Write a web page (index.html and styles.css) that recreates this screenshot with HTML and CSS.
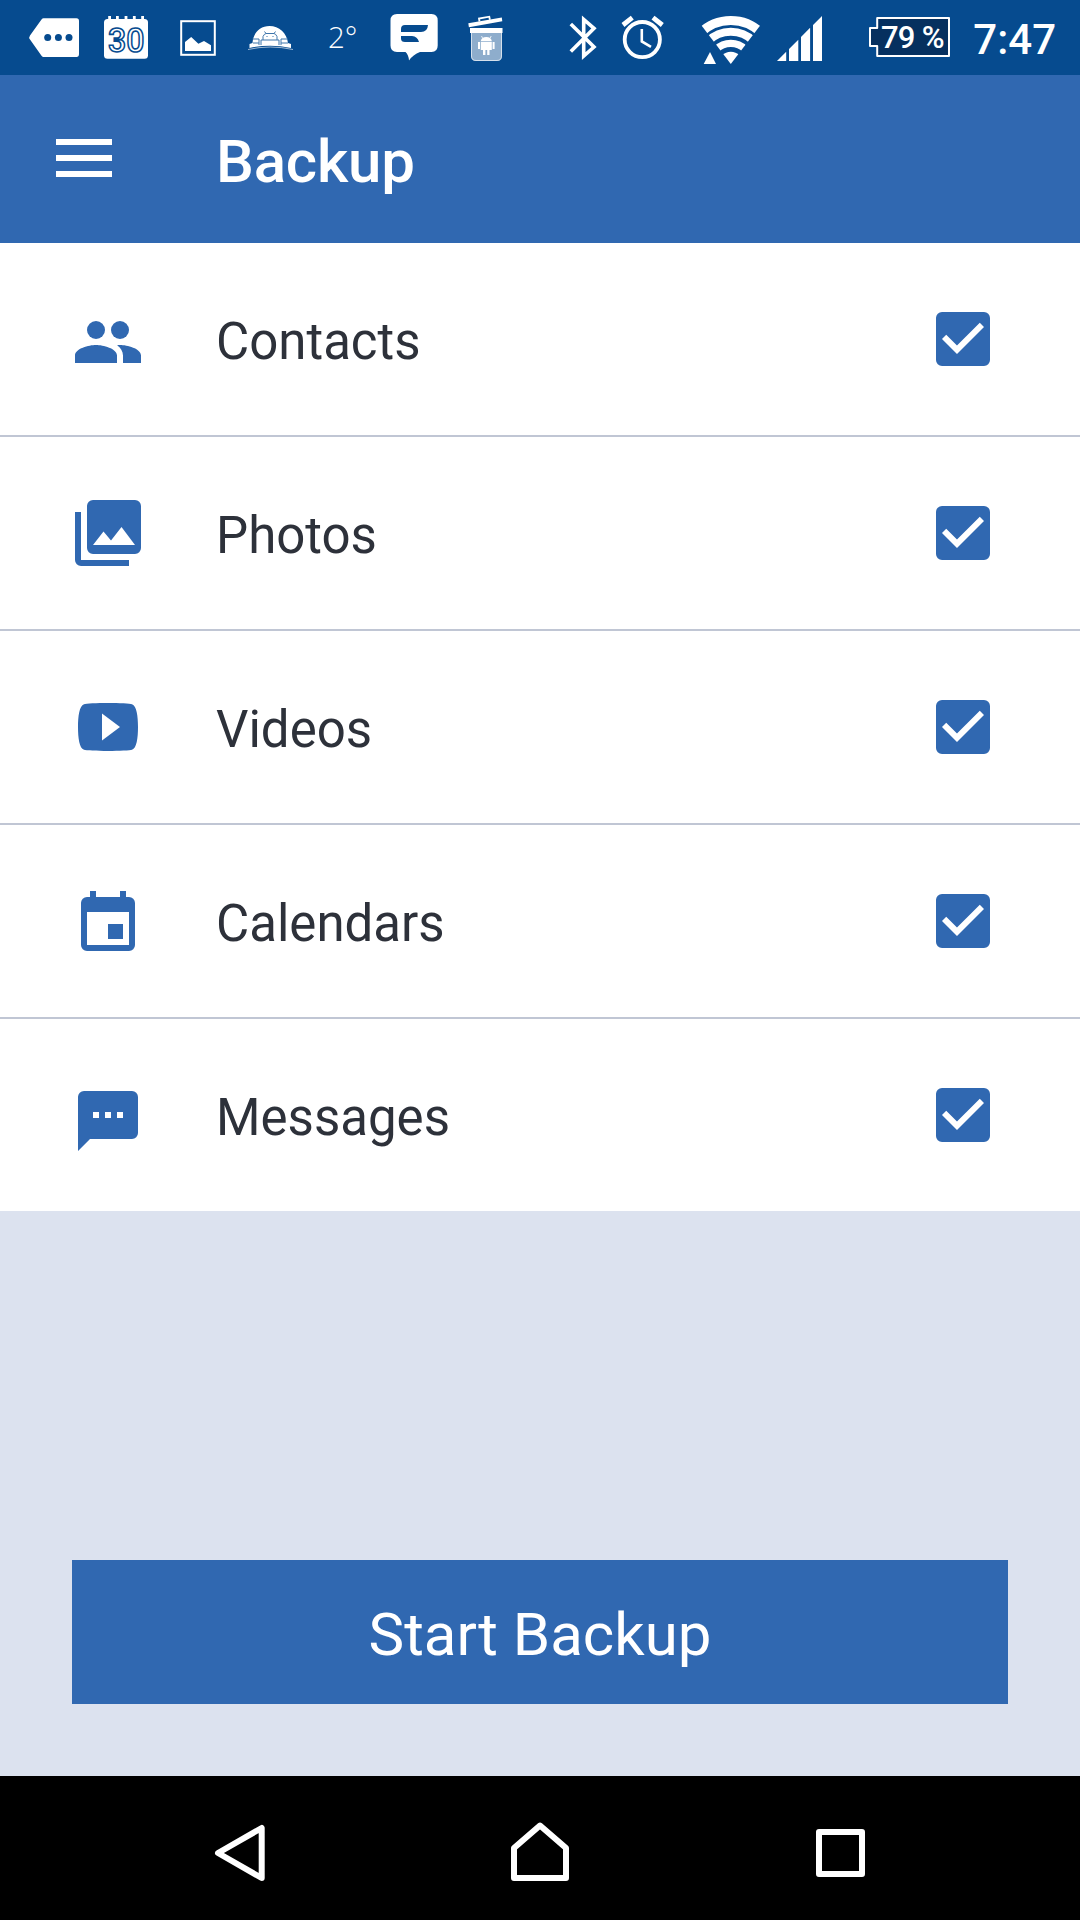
FILE: index.html
```
<!DOCTYPE html>
<html lang="en">
<head>
    <meta charset="UTF-8">
    <meta name="viewport" content="width=device-width, initial-scale=1.0">
    <title>Backup</title>
    <link rel="stylesheet" href="styles.css">
</head>
<body>
    <div class="screen">
        <div class="status-bar">
            <div class="notifications">
                <!-- more -->
                <svg viewBox="0 0 72 75">
                    <path d="M25.5 18.3H58.5Q61 18.3 61 21V54Q61 57 58.5 57H25.5Q24.5 57 23.5 55.8L12 39.5Q10.5 37.5 12 35.5L23.5 19.5Q24.5 18.3 25.5 18.3Z"/>
                    <g class="cut">
                        <circle cx="29.7" cy="37.4" r="3.5"/>
                        <circle cx="40.4" cy="37.4" r="3.5"/>
                        <circle cx="51" cy="37.4" r="3.5"/>
                    </g>
                </svg>
                <!-- calendar -->
                <svg viewBox="0 0 72 75">
                    <rect x="14" y="19" width="44" height="39.7" rx="3.5"/>
                    <path d="M18.2 16h2.8v4h-2.8zM26 16h2.8v4H26zM34.6 16h2.8v4h-2.8zM42.9 16h2.8v4h-2.8zM51.2 16h2.8v4h-2.8z"/>
                    <text class="cal-day" x="18" y="51.5" textLength="36.5" lengthAdjust="spacingAndGlyphs">30</text>
                </svg>
                <!-- picture -->
                <svg viewBox="0 0 72 75">
                    <rect class="line" x="19.2" y="21.2" width="33.6" height="33.6" stroke-width="2"/>
                    <path d="M23 42L29.2 37L36.4 43.8L42 41L49 45.2V51H23Z"/>
                </svg>
                <!-- android dome -->
                <svg viewBox="0 0 72 75">
                    <path d="M18.5 43C19 33 26 26 35.5 26S53 33 54 43L57 44V48Q36 43.5 15.5 48V44Z"/>
                    <path class="line" d="M14 49.5Q36 44.5 59 49.5" stroke-width="1" opacity=".6"/>
                    <g class="cut-line">
                        <path d="M29 40V36.5Q30 34 32 33.5L30.5 31.5M43 40V36.5Q42 34 40 33.5L41.5 31.5M32 33.5H40M27 45V40H45V45M18.5 39H25V45M54 39H47V45M19 43H25M47 43H54M32.5 36.5H33.5M38.5 36.5H39.5"/>
                    </g>
                </svg>
                <!-- temperature -->
                <svg viewBox="0 0 72 75">
                    <text class="temp" x="22" y="48">2°</text>
                </svg>
                <!-- chat -->
                <svg viewBox="0 0 72 75">
                    <path d="M19 14H53.5Q59.7 14 59.7 20.5V45.5Q59.7 52 53.5 52H42Q35 54.5 31 60.5Q30.5 54.5 27.5 52H19Q12.5 52 12.5 45.5V20.5Q12.5 14 19 14Z"/>
                    <path class="cut" d="M27 25H50Q49.5 32 43 32H23V29Q23 25 27 25ZM23 36H34Q39.5 36.3 41 42H27Q23 42 23 38.5Z"/>
                </svg>
                <!-- trash -->
                <svg viewBox="0 0 72 75">
                    <path d="M18.3 23.2L51.8 17.5L52.3 21.2L18.9 27.2Z"/>
                    <path class="line" d="M29.5 21.5L29 18.5L39.3 16.7L39.9 19.7" stroke-width="1.8"/>
                    <rect x="20" y="28" width="32.5" height="5"/>
                    <path d="M21 33H52V56Q52 61 47 61H26Q21 61 21 56Z" opacity=".55"/>
                    <path class="line" d="M21.5 33V56Q21.5 60.5 26 60.5H47Q51.5 60.5 51.5 56V33" stroke-width=".9" opacity=".7"/>
                    <path d="M30.8 41Q31.5 37 36.3 37T41.8 41ZM30.8 41.8H41.8V50H39.5V55H37.2V50H35.4V55H33V50H30.8ZM28 42H30V49H28ZM42.6 42H44.6V49H42.6Z"/>
                    <path class="line" d="M32.5 38L31.5 36M40.2 38L41.2 36" stroke-width=".8"/>
                </svg>
            </div>

            <div class="system">
                <!-- bluetooth -->
                <svg class="bluetooth" viewBox="0 0 60 75">
                    <path class="line" d="M18.8 24L42 47L31.7 56V19.5L42 28.3L18.8 51.5" stroke-width="3.6"/>
                </svg>
                <!-- alarm -->
                <svg class="alarm" viewBox="0 0 60 75">
                    <circle class="line" cx="30.3" cy="39.6" r="17.6" stroke-width="3.8"/>
                    <path class="line" d="M29.8 29V41.5L39 46.8" stroke-width="2.6"/>
                    <path class="line" d="M11 25L20.3 17.7M50.3 25L41 17.7" stroke-width="4.8"/>
                </svg>
                <!-- wifi -->
                <svg class="wifi" viewBox="0 0 70 75">
                    <clipPath id="wedge"><path d="M34.8 64L-2.2 15.3V0H72V15.3Z"/></clipPath>
                    <g clip-path="url(#wedge)">
                        <circle cx="34.8" cy="64" r="12.3"/>
                        <circle class="line" cx="34.8" cy="64" r="20.6" stroke-width="7.2"/>
                        <circle class="line" cx="34.8" cy="64" r="32.2" stroke-width="8"/>
                        <circle class="line" cx="34.8" cy="64" r="43.6" stroke-width="9"/>
                    </g>
                    <path d="M7.7 64L14 52L20 64Z"/>
                </svg>
                <!-- signal -->
                <svg class="signal" viewBox="0 0 60 75">
                    <path d="M7 61L16.2 51.8V61ZM19 61V49L28.3 39.7V61ZM31 61V37L40.1 27.8V61ZM43 61V25L52 16V61Z"/>
                </svg>
                <!-- battery -->
                <svg class="battery" viewBox="0 0 92 75">
                    <path class="battery-body" d="M13.2 18H85V56H13.2V46H6V28H13.2Z"/>
                    <text class="battery-text" x="17" y="48" textLength="63.5">79 %</text>
                </svg>
                <span class="clock">7:47</span>
            </div>
        </div>

        <div class="app-bar">
            <div class="menu">
                <span></span>
                <span></span>
                <span></span>
            </div>
            <div class="title">Backup</div>
        </div>

        <div class="list">
            <div class="row">
                <svg class="icon" viewBox="0 0 24 24">
                    <path d="M16 14c-.29 0-.62.02-.97.05 1.16.84 1.97 1.97 1.97 3.45V20h6v-2.5c0-2.33-4.67-3.5-7-3.5zM8 14c-2.33 0-7 1.17-7 3.5V20h14v-2.5c0-2.33-4.67-3.5-7-3.5z"/>
                    <circle cx="8" cy="9" r="3"/>
                    <circle cx="16" cy="9" r="3"/>
                </svg>
                <span class="label">Contacts</span>
                <svg class="check" viewBox="0 0 24 24"><use href="#checkbox"/></svg>
            </div>
            <div class="row">
                <svg class="icon" viewBox="0 0 24 24">
                    <path fill-rule="evenodd" d="M7 1h14a2 2 0 0 1 2 2v14a2 2 0 0 1-2 2H7a2 2 0 0 1-2-2V3a2 2 0 0 1 2-2zM7 16h14l-4.5-6-3.5 4.5-2.5-3z"/>
                    <path d="M3 5H1v16a2 2 0 0 0 2 2h16v-2H3z"/>
                </svg>
                <span class="label">Photos</span>
                <svg class="check" viewBox="0 0 24 24"><use href="#checkbox"/></svg>
            </div>
            <div class="row">
                <svg class="icon" viewBox="0 0 24 24">
                    <path d="M10 16.5V7.5L16 12M20 4.4C19.4 4.2 15.7 4 12 4S4.6 4.19 4 4.38C2.44 4.9 2 8.4 2 12s.44 7.1 2 7.61C4.6 19.81 8.3 20 12 20s7.4-.19 8-.39c1.56-.51 2-4.02 2-7.61s-.44-7.09-2-7.6z"/>
                </svg>
                <span class="label">Videos</span>
                <svg class="check" viewBox="0 0 24 24"><use href="#checkbox"/></svg>
            </div>
            <div class="row">
                <svg class="icon" viewBox="0 0 24 24">
                    <path fill-rule="evenodd" d="M6 2h2v2h8V2h2v2h1a2 2 0 0 1 2 2v14a2 2 0 0 1-2 2H5a2 2 0 0 1-2-2V6a2 2 0 0 1 2-2h1zM5 9v11h14V9zM12 13h5v5h-5z"/>
                </svg>
                <span class="label">Calendars</span>
                <svg class="check" viewBox="0 0 24 24"><use href="#checkbox"/></svg>
            </div>
            <div class="row">
                <svg class="icon" viewBox="0 0 24 24">
                    <path fill-rule="evenodd" d="M4 4h16a2 2 0 0 1 2 2v12a2 2 0 0 1-2 2H6l-4 4V6a2 2 0 0 1 2-2zM7 11v2h2v-2zM11 11v2h2v-2zM15 11v2h2v-2z"/>
                </svg>
                <span class="label">Messages</span>
                <svg class="check" viewBox="0 0 24 24">
                    <path id="checkbox" d="M19 3H5a2 2 0 0 0-2 2v14a2 2 0 0 0 2 2h14a2 2 0 0 0 2-2V5a2 2 0 0 0-2-2zM10 17l-5-5 1.41-1.41L10 14.17l7.59-7.59L19 8z"/>
                </svg>
            </div>
        </div>

        <div class="actions">
            <button class="start">Start Backup</button>
        </div>

        <div class="nav-bar">
            <svg viewBox="0 0 72 72"><path d="M14 41L57.7 16V66Z"/></svg>
            <svg viewBox="0 0 72 72"><path d="M10 66V36L36 13.5L62 36V66Z"/></svg>
            <svg viewBox="0 0 72 72"><path d="M15 20H58V62H15Z"/></svg>
        </div>
    </div>
</body>
</html>
```
FILE: styles.css
```
body {
  margin: 0;
  font-family: Roboto, sans-serif;
}

.screen {
  display: flex;
  flex-direction: column;
  width: 1080px;
  height: 1920px;
  background-color: #dce2ef;
}

svg {
  display: block;
  flex: none;
}

/* Status bar */
.status-bar {
  display: flex;
  justify-content: space-between;
  height: 75px;
  padding: 0 24px 0 18px;
  background-color: #064b8f;
  box-sizing: border-box;
}

.status-bar svg {
  height: 75px;
  fill: #fff;
}

.notifications,
.system {
  display: flex;
}

.notifications svg {
  width: 72px;
}

.status-bar .line {
  fill: none;
  stroke: #fff;
}

.status-bar .cut {
  fill: #064b8f;
}

.status-bar .cut-line {
  fill: none;
  stroke: #3f76ac;
  stroke-width: 1;
}

/* outlined day number */
.cal-day {
  fill: #fff;
  stroke: #064b8f;
  stroke-width: 1.6;
  font-size: 33.5px;
  font-weight: 500;
}

.temp {
  font-family: "Open Sans", sans-serif;
  font-size: 29.5px;
  font-weight: 300;
}

.bluetooth,
.alarm,
.signal {
  width: 60px;
}

.wifi {
  width: 70px;
  margin-left: 24px;
}

.signal {
  margin-left: 4px;
}

.battery {
  width: 92px;
  margin-left: 34px;
}

.battery-body {
  fill: #06305f;
  stroke: #fff;
  stroke-width: 2;
  stroke-linejoin: round;
}

.battery-text {
  font-size: 31px;
  font-weight: 500;
}

.clock {
  margin-left: 17px;
  color: #fff;
  font-size: 42px;
  font-weight: 500;
  line-height: 80px;
}

/* App bar */
.app-bar {
  display: flex;
  align-items: center;
  height: 168px;
  padding-left: 56px;
  background-color: #3068b1;
  box-sizing: border-box;
}

.menu {
  display: flex;
  flex-direction: column;
  gap: 10px;
  width: 56px;
  margin-bottom: 2px;
}

.menu span {
  height: 6px;
  background-color: #fff;
}

.title {
  margin-left: 104px;
  padding-top: 4px;
  color: #fff;
  font-size: 60px;
  font-weight: 500;
  letter-spacing: -0.2px;
}

/* Backup items */
.list {
  background-color: #fff;
}

.row {
  display: flex;
  align-items: center;
  height: 192px;
  padding: 0 81px 0 72px;
}

.row + .row {
  border-top: 2px solid #c0c6d4;
}

.icon,
.check {
  width: 72px;
  height: 72px;
  fill: #3068b1;
}

.label {
  flex: 1;
  margin-left: 72px;
  padding-top: 5px;
  color: #2d313a;
  font-size: 51px;
}

.actions {
  display: flex;
  flex: 1;
  align-items: flex-end;
  padding: 72px;
}

.start {
  width: 100%;
  height: 144px;
  padding: 4px 0 0;
  border: none;
  background-color: #3068b1;
  color: #fff;
  font-family: inherit;
  font-size: 60px;
}

/* Navigation bar */
.nav-bar {
  display: flex;
  justify-content: center;
  align-items: center;
  gap: 228px;
  height: 144px;
  background-color: #000;
}

.nav-bar svg {
  width: 72px;
  height: 72px;
  fill: none;
  stroke: #fff;
  stroke-width: 6;
  stroke-linejoin: round;
}
```
